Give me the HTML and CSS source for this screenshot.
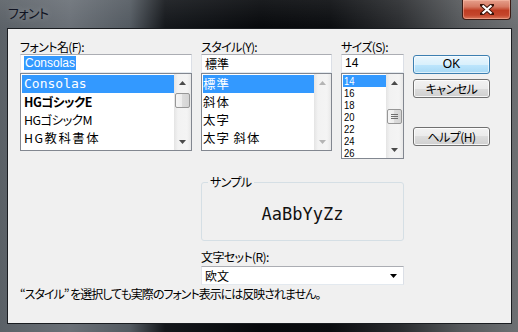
FILE: index.html
```html
<!DOCTYPE html>
<html lang="ja">
<head>
<meta charset="UTF-8">
<title>フォント</title>
<link rel="stylesheet" href="styles.css">
</head>
<body>
<div class="window">
    <div class="titlebar">
        <span class="title">フォント</span>
        <button class="close" type="button">
            <svg width="14" height="11" viewBox="0 0 14 11">
                <path d="M2 1 L12 10 M12 1 L2 10" stroke="#3a1208" stroke-width="4" stroke-linecap="square"/>
                <path d="M2.5 1.5 L11.5 9.5 M11.5 1.5 L2.5 9.5" stroke="#fff" stroke-width="2.2"/>
            </svg>
        </button>
    </div>
    <div class="frame">
        <div class="client">
            <div class="top">
                <div class="col col-font">
                    <label>フォント名(F):</label>
                    <div class="edit edit-latin"><span class="picked">Consolas</span></div>
                    <div class="listbox">
                        <ul class="items">
                            <li class="item sel font-consolas">Consolas</li>
                            <li class="item font-hge">HGゴシックE</li>
                            <li class="item font-hgm">HGゴシックM</li>
                            <li class="item font-hgk">HG教科書体</li>
                        </ul>
                        <div class="vscroll">
                            <div class="arrow up"><svg width="7" height="4" viewBox="0 0 7 4"><path d="M0 4 L3.5 0 L7 4 Z"/></svg></div>
                            <div class="track"><div class="thumb thumb-font"></div></div>
                            <div class="arrow down"><svg width="7" height="4" viewBox="0 0 7 4"><path d="M0 0 L7 0 L3.5 4 Z"/></svg></div>
                        </div>
                    </div>
                </div>
                <div class="col col-style">
                    <label>スタイル(Y):</label>
                    <div class="edit">標準</div>
                    <div class="listbox">
                        <ul class="items style-items">
                            <li class="item sel">標準</li>
                            <li class="item">斜体</li>
                            <li class="item">太字</li>
                            <li class="item">太字 斜体</li>
                        </ul>
                        <div class="vscroll disabled">
                            <div class="arrow up"><svg width="7" height="4" viewBox="0 0 7 4"><path d="M0 4 L3.5 0 L7 4 Z"/></svg></div>
                            <div class="track"></div>
                            <div class="arrow down"><svg width="7" height="4" viewBox="0 0 7 4"><path d="M0 0 L7 0 L3.5 4 Z"/></svg></div>
                        </div>
                    </div>
                </div>
                <div class="col col-size">
                    <label>サイズ(S):</label>
                    <div class="edit edit-latin">14</div>
                    <div class="listbox listbox-size">
                        <ul class="items size-items">
                            <li class="item sel"><span>14</span></li>
                            <li class="item"><span>16</span></li>
                            <li class="item"><span>18</span></li>
                            <li class="item"><span>20</span></li>
                            <li class="item"><span>22</span></li>
                            <li class="item"><span>24</span></li>
                            <li class="item"><span>26</span></li>
                        </ul>
                        <div class="vscroll">
                            <div class="arrow up"><svg width="7" height="4" viewBox="0 0 7 4"><path d="M0 4 L3.5 0 L7 4 Z"/></svg></div>
                            <div class="track">
                                <div class="thumb thumb-size">
                                    <svg width="7" height="6" viewBox="0 0 7 6"><path d="M0 0.5 H7 M0 2.5 H7 M0 4.5 H7" stroke="#6f6f6f" stroke-width="1"/></svg>
                                </div>
                            </div>
                            <div class="arrow down"><svg width="7" height="4" viewBox="0 0 7 4"><path d="M0 0 L7 0 L3.5 4 Z"/></svg></div>
                        </div>
                    </div>
                </div>
                <div class="buttons">
                    <button class="btn default" type="button">OK</button>
                    <button class="btn" type="button">キャンセル</button>
                    <button class="btn help" type="button">ヘルプ(H)</button>
                </div>
            </div>

            <div class="lower">
                <fieldset class="sample">
                    <legend>サンプル</legend>
                    <div class="sample-text">AaBbYyZz</div>
                </fieldset>
                <label>文字セット(R):</label>
                <div class="combo">
                    <span>欧文</span>
                    <svg width="7" height="4" viewBox="0 0 7 4"><path d="M0 0 L7 0 L3.5 4 Z"/></svg>
                </div>
            </div>

            <p class="note">“スタイル” を選択しても実際のフォント表示には反映されません。</p>
        </div>
    </div>
</div>
</body>
</html>
```

FILE: styles.css
```css
body {
    margin: 0;
    font-family: "Noto Sans CJK JP", sans-serif;
    font-size: 12px;
    font-feature-settings: "palt" 1;
    color: #000;
    background: #000;
}

.window {
    width: 518px;
    height: 332px;
    display: flex;
    flex-direction: column;
    background:
        linear-gradient(180deg, rgba(255, 255, 255, 0.08) 0, rgba(255, 255, 255, 0) 28px),
        linear-gradient(90deg, #5b6167 0, #6a7077 70px, #535a61 130px, #14171b 165px, #07090c 260px, #0b0d10 330px, #2a2c2f 400px, #55585b 460px, #6d7073 518px);
    overflow: hidden;
}

.titlebar {
    height: 28px;
    display: flex;
    justify-content: space-between;
    align-items: flex-start;
    padding-left: 8px;
}

.title {
    margin-top: 5px;
    font-size: 13px;
    line-height: 16px;
    color: #101322;
    letter-spacing: -0.5px;
    text-shadow: 0 0 6px rgba(255, 255, 255, 0.35);
}

.close {
    width: 49px;
    height: 20px;
    margin-right: 7px;
    padding: 0;
    border: 1px solid #3b1b14;
    border-top: none;
    border-radius: 0 0 4px 4px;
    background: linear-gradient(180deg, #e6a08c 0, #d67a63 35%, #bf3d23 55%, #c4462c 80%, #d9785c 100%);
    box-shadow: inset 0 0 0 1px rgba(255, 200, 180, 0.45);
    display: flex;
    align-items: center;
    justify-content: center;
}

.frame {
    flex: 1;
    display: flex;
    padding: 0 6px 8px 7px;
}

.client {
    flex: 1;
    background: #f0f0f0;
    border: 1px solid #1a1d21;
    padding: 11px 0 0 12px;
}

label {
    display: block;
    height: 14px;
    line-height: 14px;
    letter-spacing: -0.6px;
}

.top {
    display: flex;
    align-items: flex-start;
    gap: 9px;
}

.col {
    display: flex;
    flex-direction: column;
}

.col-font {
    width: 172px;
}

.col-style {
    width: 131px;
}

.col-size {
    width: 63px;
}

.edit {
    height: 19px;
    box-sizing: border-box;
    border: 1px solid;
    border-color: #abadb3 #dbdfe6 #e3e9ef #e2e3ea;
    background: #fff;
    padding: 0 3px;
    line-height: 17px;
}

.edit-latin {
    font-family: "Liberation Sans", sans-serif;
}

.picked {
    background: #3399ff;
    color: #fff;
    padding: 0 1px;
}

.listbox {
    height: 78px;
    box-sizing: border-box;
    border: 1px solid #828790;
    background: #fff;
    display: flex;
    overflow: hidden;
}

.listbox-size {
    height: 86px;
}

.items {
    flex: 1;
    list-style: none;
    margin: 0;
    padding: 1px 0 0 1px;
    overflow: hidden;
}

.item {
    height: 18px;
    line-height: 18px;
    padding-left: 2px;
    white-space: nowrap;
    font-size: 12.4px;
}

.item.sel {
    background: #3399ff;
    color: #fff;
}

.font-consolas {
    font-family: "DejaVu Sans Mono", monospace;
    font-size: 13px;
}

.font-hge {
    font-weight: bold;
    letter-spacing: -0.5px;
}

.font-hgm {
    letter-spacing: -0.5px;
}

.font-hgk {
    letter-spacing: 1.5px;
}

.style-items .item {
    padding-left: 0;
    letter-spacing: 1px;
}

.size-items .item {
    height: 12px;
    line-height: 12px;
    font-family: "Liberation Sans", sans-serif;
    font-size: 10.5px;
    padding-left: 1px;
}

.size-items .item span {
    display: inline-block;
    transform: scaleX(0.9);
    transform-origin: left center;
}

.vscroll {
    width: 17px;
    display: flex;
    flex-direction: column;
    background: linear-gradient(90deg, #e4e4e4 0, #f2f2f2 4px, #f4f4f4 13px, #e8e8e8 17px);
}

.arrow {
    height: 17px;
    display: flex;
    align-items: center;
    justify-content: center;
}

.arrow svg {
    fill: #4a4a4a;
}

.vscroll.disabled .arrow svg {
    fill: #b4b4b4;
}

.track {
    flex: 1;
}

.thumb {
    width: 15px;
    box-sizing: border-box;
    margin-left: 1px;
    border: 1px solid #979797;
    border-radius: 2px;
    background: linear-gradient(90deg, #f5f5f5 0, #ececec 50%, #dcdcdc 50%, #d4d4d4 100%);
    display: flex;
    align-items: center;
    justify-content: center;
}

.thumb-font {
    height: 15px;
    margin-top: 2px;
}

.thumb-size {
    height: 15px;
    margin-top: 18px;
}

.buttons {
    width: 77px;
    display: flex;
    flex-direction: column;
    padding-top: 15px;
}

.btn {
    width: 77px;
    height: 19px;
    padding: 0;
    font: inherit;
    font-feature-settings: "palt" 1;
    letter-spacing: -0.5px;
    line-height: 15px;
    color: #000;
    border: 1px solid #707070;
    border-radius: 3px;
    background: linear-gradient(180deg, #f2f2f2 0, #ebebeb 50%, #dddddd 50%, #cfcfcf 100%);
    box-shadow: inset 0 0 0 1px rgba(255, 255, 255, 0.8);
}

.btn + .btn {
    margin-top: 5px;
}

.btn.default {
    border-color: #3c7fb1;
    background: linear-gradient(180deg, #eaf6fd 0, #d9f0fc 50%, #bee6fd 50%, #a7d9f5 100%);
    box-shadow: inset 0 0 0 1px rgba(255, 255, 255, 0.6);
    font-family: "Liberation Sans", sans-serif;
    letter-spacing: 0;
}

.btn.help {
    margin-top: 29px;
}

.lower {
    margin: 17px 0 0 181px;
    width: 203px;
}

.sample {
    margin: 0;
    padding: 0;
    min-width: 0;
    border: 1px solid #d5dfe5;
    border-radius: 3px;
}

.sample legend {
    margin-left: 6px;
    padding: 0 2px;
    height: 12px;
    line-height: 12px;
    letter-spacing: -0.6px;
}

.sample-text {
    height: 52px;
    display: flex;
    align-items: center;
    justify-content: center;
    font-family: "DejaVu Sans Mono", monospace;
    font-size: 17px;
    color: #111;
}

.lower label {
    margin-top: 9px;
}

.combo {
    margin-top: 2px;
    height: 19px;
    box-sizing: border-box;
    border: 1px solid;
    border-color: #abadb3 #dbdfe6 #e3e9ef #e2e3ea;
    background: #fff;
    padding: 0 6px 0 3px;
    display: flex;
    align-items: center;
    justify-content: space-between;
}

.combo svg {
    fill: #000;
}

.note {
    margin: 2px 0 0;
    line-height: 14px;
    letter-spacing: -1px;
}
```
